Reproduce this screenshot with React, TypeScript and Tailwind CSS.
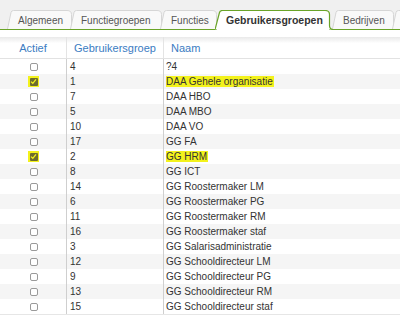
const tabs = [
  { label: "Algemeen", w: 66 },
  { label: "Functiegroepen", w: 93 },
  { label: "Functies", w: 58 },
  { label: "Gebruikersgroepen", w: 120, active: true },
  { label: "Bedrijven", w: 63 },
  { label: "", w: 40 },
];

const rows: { on: boolean; id: string; name: string }[] = [
  { on: false, id: "4", name: "?4" },
  { on: true, id: "1", name: "DAA Gehele organisatie" },
  { on: false, id: "7", name: "DAA HBO" },
  { on: false, id: "5", name: "DAA MBO" },
  { on: false, id: "10", name: "DAA VO" },
  { on: false, id: "17", name: "GG FA" },
  { on: true, id: "2", name: "GG HRM" },
  { on: false, id: "8", name: "GG ICT" },
  { on: false, id: "14", name: "GG Roostermaker LM" },
  { on: false, id: "6", name: "GG Roostermaker PG" },
  { on: false, id: "11", name: "GG Roostermaker RM" },
  { on: false, id: "16", name: "GG Roostermaker staf" },
  { on: false, id: "3", name: "GG Salarisadministratie" },
  { on: false, id: "12", name: "GG Schooldirecteur LM" },
  { on: false, id: "9", name: "GG Schooldirecteur PG" },
  { on: false, id: "13", name: "GG Schooldirecteur RM" },
  { on: false, id: "15", name: "GG Schooldirecteur staf" },
];

function Tab({ label, w, active }: { label: string; w: number; active?: boolean }) {
  const h = active ? 20 : 19;
  return (
    <div
      className={`relative flex shrink-0 items-center pl-[11px] pt-px ${active ? "z-10 -mb-px h-[20px]" : "h-[19px]"}`}
      style={{ width: w, marginLeft: -3 }}
    >
      <svg className="absolute inset-0" width={w} height={h} viewBox={`0 0 ${w} ${h}`}>
        {active ? (
          <>
            <rect x="2" y="18" width={w - 8} height="2" fill="#ffffff" />
            <path
              d={`M0,19.5 L4.5,2.5 Q5,0.5 7.5,0.5 L${w - 10},0.5 Q${w - 5.5},0.5 ${w - 5.5},4.5 L${w - 5.5},15.5 Q${w - 5.5},19.5 ${w - 1.5},19.5 L${w},19.5`}
              fill="#ffffff"
              stroke="#6aa428"
              strokeWidth="1.2"
            />
          </>
        ) : (
          <path
            d={`M0.5,19 L4,2.5 Q4.5,0.5 6.5,0.5 L${w - 6},0.5 Q${w - 1.5},0.5 ${w - 1.5},4.5 L${w - 1.5},19`}
            fill="#f9f9f9"
            stroke="#d6d6d6"
            strokeWidth="1"
          />
        )}
      </svg>
      <span
        className={`relative whitespace-nowrap ${active ? "text-[10.5px] font-bold text-[#333333]" : "text-[10px] text-[#555555]"}`}
      >
        {label}
      </span>
    </div>
  );
}

function Checkbox({ on }: { on: boolean }) {
  if (on) {
    return (
      <span className="flex h-[11px] w-[11px] items-center justify-center bg-[#f3f21c]">
        <span className="flex h-[8px] w-[8px] items-center justify-center rounded-[1px] bg-[#6d6c2e]">
          <svg width="7" height="7" viewBox="0 0 7 7">
            <path d="M1,3.6 L2.8,5.3 L6,1.4" fill="none" stroke="#f3f21c" strokeWidth="1.3" />
          </svg>
        </span>
      </span>
    );
  }
  return <span className="block h-[8px] w-[8px] rounded-[2px] border border-[#9a9a9a] bg-white" />;
}

export default function App() {
  return (
    <div className="h-[335px] w-[400px] overflow-hidden bg-white font-['Liberation_Sans',Arial,sans-serif] text-[#333333]">
      {/* Tabs */}
      <div className="flex h-[30px] items-end border-b border-[#6aa428] bg-[#f0f0f0] pl-[10px]">
        {tabs.map((t, i) => (
          <Tab key={i} label={t.label} w={t.w} active={t.active} />
        ))}
      </div>

      <div className="pt-[7px]">
        {/* Header */}
        <div className="grid h-[22px] grid-cols-[67px_97px_1fr] border-b border-[#e2e2e2] bg-gradient-to-b from-[#e9e9e9] to-white to-[30%] text-[11px] text-[#3b7cc2]">
          <div className="flex items-center justify-center border-r border-[#e4e4e4] pt-[2px]">Actief</div>
          <div className="flex items-center border-r border-[#e4e4e4] pl-[7px] pt-[2px]">Gebruikersgroep</div>
          <div className="flex items-center pl-[7px] pt-[2px]">Naam</div>
        </div>

        {/* Rows */}
        <div className="border-b border-[#e6e6e6]">
          {rows.map((r, i) => (
            <div
              key={r.id}
              className={`grid h-[15px] grid-cols-[67px_97px_1fr] text-[10px] ${i % 2 === 1 ? "bg-[#f5f5f5]" : "bg-white"}`}
            >
              <div className="flex items-center justify-center border-r border-[#cfcfcf] pl-px">
                <Checkbox on={r.on} />
              </div>
              <div className="flex items-center border-r border-[#cfcfcf] pl-[3px]">{r.id}</div>
              <div className="flex items-center pl-[2px]">
                <span className={r.on ? "bg-[#f3f21c] pr-px leading-[11px]" : ""}>{r.name}</span>
              </div>
            </div>
          ))}
        </div>
      </div>
    </div>
  );
}
